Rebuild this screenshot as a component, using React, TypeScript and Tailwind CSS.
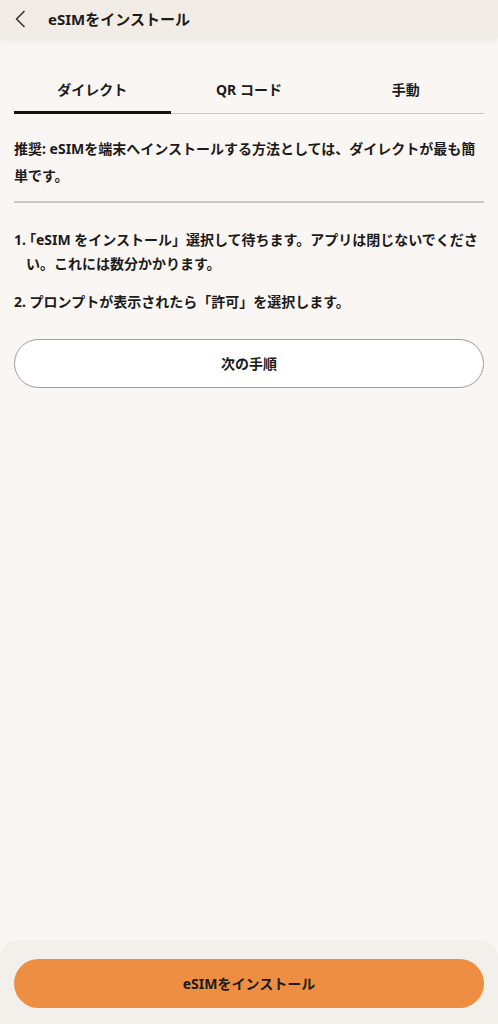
import React, { useState } from "react";

const tabs = ["ダイレクト", "QR コード", "手動"];

export default function App() {
  const [active, setActive] = useState(0);

  return (
    <div
      className="flex h-[1024px] w-full flex-col bg-[#f9f6f3] text-[#1c1b1a]"
      style={{ fontFamily: '"Noto Sans", "Noto Sans CJK JP", sans-serif' }}
    >
      {/* header */}
      <div className="relative z-10 flex h-[38px] items-center bg-[#f2ece6] shadow-[0_3px_6px_rgba(0,0,0,0.06)]">
        <button type="button" className="flex h-full w-[48px] items-center pl-[14px]">
          <svg width="12" height="18" viewBox="0 0 12 18" fill="none">
            <polyline
              points="10,1.5 2.5,9 10,16.5"
              stroke="#3a3836"
              strokeWidth="1.7"
              strokeLinecap="round"
              strokeLinejoin="round"
            />
          </svg>
        </button>
        <h1 className="text-[15px] font-bold leading-5">eSIMをインストール</h1>
      </div>

      <div className="flex flex-1 flex-col px-[14px]">
        {/* tabs */}
        <div className="mt-[42px] flex border-b border-[#c9c5c1]">
          {tabs.map((tab, i) => (
            <button
              key={tab}
              type="button"
              onClick={() => setActive(i)}
              className="relative flex-1 pb-[13px] text-center text-[14px] font-bold leading-5"
            >
              {tab}
              {active === i && (
                <span className="absolute -bottom-[1px] left-0 right-0 h-[3px] bg-[#111]" />
              )}
            </button>
          ))}
        </div>

        {/* recommendation */}
        <p className="mt-[21px] text-[14px] font-bold leading-[27px]">
          推奨: eSIMを端末へインストールする方法としては、ダイレクトが最も簡単です。
        </p>
        <div className="mt-[12px] h-[2px] bg-[#cbc7c3]" />

        {/* steps */}
        <ol className="mt-[25px] flex flex-col gap-[14px] text-[14px] font-bold leading-[24px]">
          <li className="pl-[12px] -indent-[12px]">
            1.<span className="ml-[3px] [font-feature-settings:'palt']">「</span>eSIM をインストール」選択して待ちます。アプリは閉じないでください。これには数分かかります。
          </li>
          <li className="pl-[12px] -indent-[12px]">
            2. プロンプトが表示されたら「許可」を選択します。
          </li>
        </ol>

        <button
          type="button"
          className="mt-[25px] h-[49px] w-full rounded-full border-[1.5px] border-[#a19c97] bg-white text-[14px] font-bold"
        >
          次の手順
        </button>
      </div>

      {/* bottom action */}
      <div className="rounded-t-[18px] bg-[#f3efeb] px-[14px] pb-[16px] pt-[19px]">
        <button
          type="button"
          className="h-[49px] w-full rounded-full bg-[#ee8e42] text-[14px] font-bold"
        >
          eSIMをインストール
        </button>
      </div>
    </div>
  );
}
